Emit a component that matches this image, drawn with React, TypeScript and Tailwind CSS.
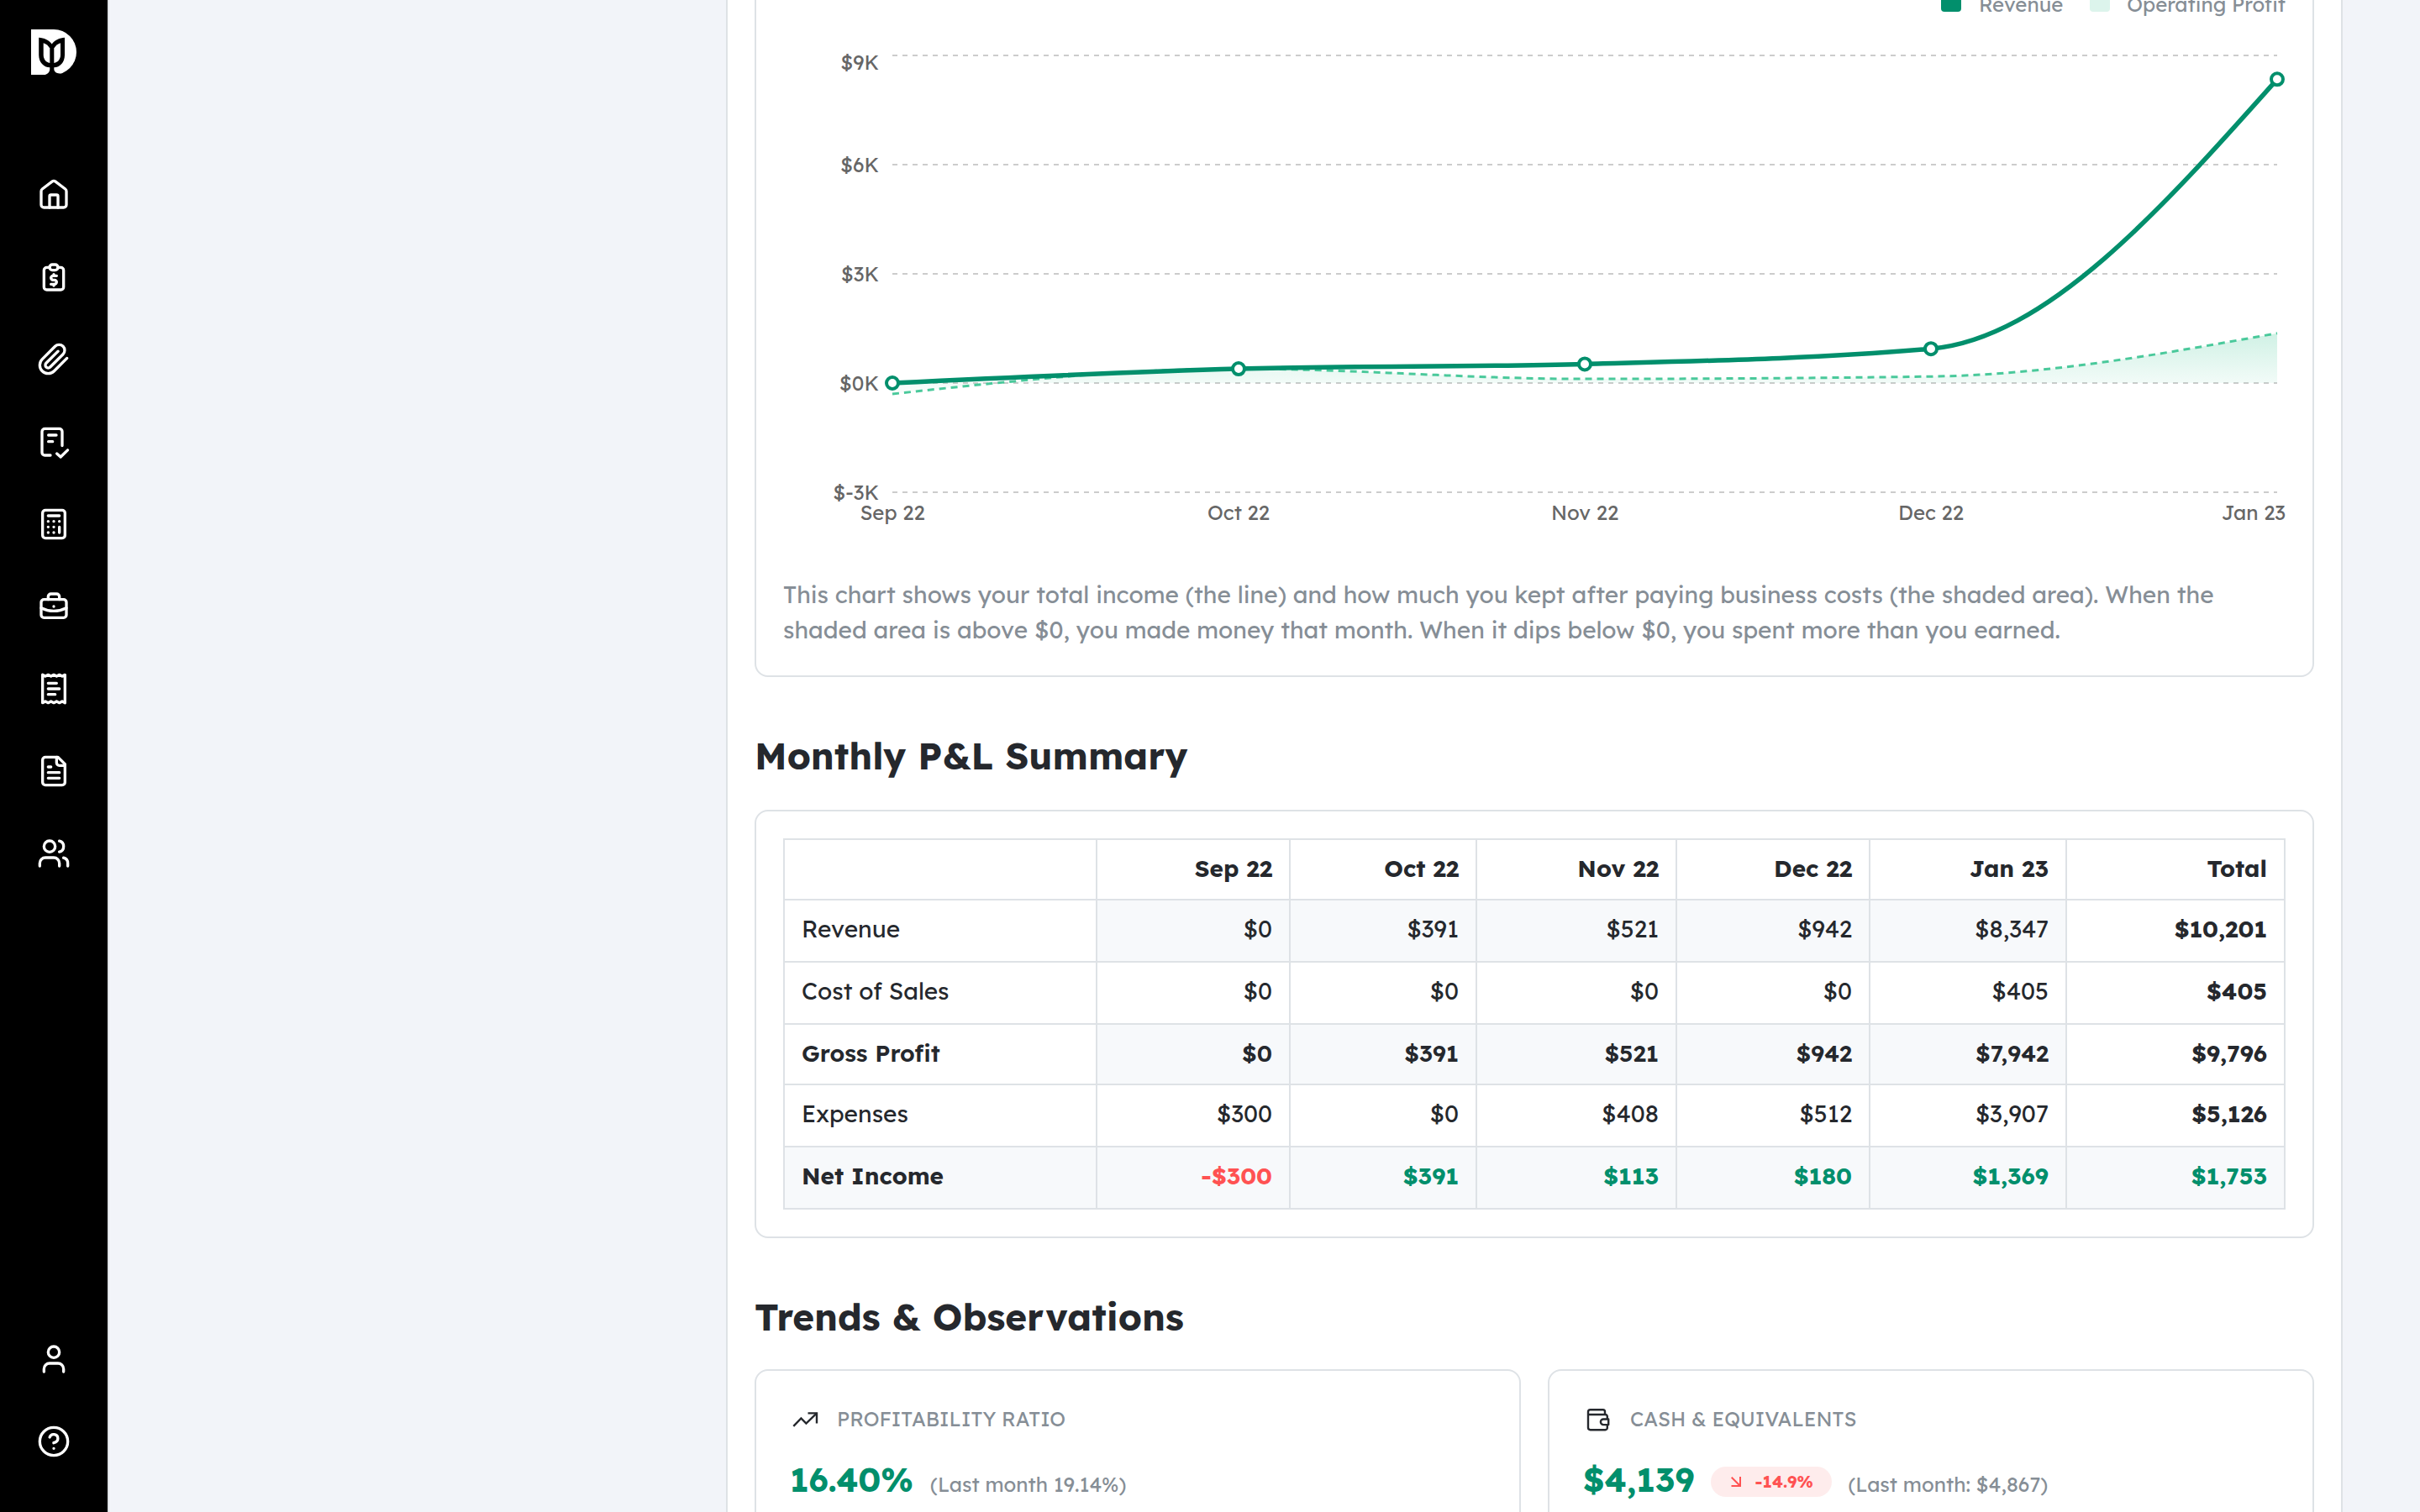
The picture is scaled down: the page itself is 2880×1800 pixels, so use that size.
import type { ReactNode } from "react";

const NAV_ICONS: { label: string; icon: ReactNode }[] = [
  {
    label: "Home",
    icon: (
      <>
        <path d="M3 9.4a2 2 0 0 1 .8-1.6l7-5.3a2 2 0 0 1 2.4 0l7 5.3a2 2 0 0 1 .8 1.6V19a2 2 0 0 1-2 2H5a2 2 0 0 1-2-2z" />
        <path d="M9 21v-8a1 1 0 0 1 1-1h4a1 1 0 0 1 1 1v8" />
      </>
    ),
  },
  {
    label: "Reports",
    icon: (
      <>
        <path d="M9 5H7a2 2 0 0 0-2 2v12a2 2 0 0 0 2 2h10a2 2 0 0 0 2-2V7a2 2 0 0 0-2-2h-2" />
        <rect x="9" y="3" width="6" height="4" rx="2" />
        <path d="M14 11h-2.5a1.5 1.5 0 0 0 0 3h1a1.5 1.5 0 0 1 0 3H10" />
        <path d="M12 17v1m0-8v1" />
      </>
    ),
  },
  {
    label: "Attachments",
    icon: (
      <path d="m21.44 11.05-9.19 9.19a6 6 0 0 1-8.49-8.49l9.19-9.19a4 4 0 0 1 5.66 5.66l-9.2 9.19a2 2 0 0 1-2.83-2.83l8.49-8.48" />
    ),
  },
  {
    label: "Tasks",
    icon: (
      <>
        <path d="M9.6 21.6H5.6a2 2 0 0 1-2-2v-15a2 2 0 0 1 2-2H16a2 2 0 0 1 2 2v10.1" />
        <path d="M8.2 7.2h5.6M8.2 11.8h3" />
        <path d="m14.2 20.4 2.7 2.4 5-4.9" />
      </>
    ),
  },
  {
    label: "Calculator",
    icon: (
      <>
        <rect x="4" y="2" width="16" height="20" rx="2" />
        <path d="M8 6h8M16 14v4M16 10h.01M12 10h.01M8 10h.01M12 14h.01M8 14h.01M12 18h.01M8 18h.01" />
      </>
    ),
  },
  {
    label: "Business",
    icon: (
      <>
        <rect x="3" y="7" width="18" height="13" rx="2" />
        <path d="M8 7V5a2 2 0 0 1 2-2h4a2 2 0 0 1 2 2v2" />
        <path d="M12 12v.01" />
        <path d="M3 13a20 20 0 0 0 18 0" />
      </>
    ),
  },
  {
    label: "Receipts",
    icon: (
      <>
        <path d="M4 2v20l2-1 2 1 2-1 2 1 2-1 2 1 2-1 2 1V2l-2 1-2-1-2 1-2-1-2 1-2-1-2 1Z" />
        <path d="M14 8H8M16 12H8M13 16H8" />
      </>
    ),
  },
  {
    label: "Documents",
    icon: (
      <>
        <path d="M15 2H6a2 2 0 0 0-2 2v16a2 2 0 0 0 2 2h12a2 2 0 0 0 2-2V7Z" />
        <path d="M14 2v4a2 2 0 0 0 2 2h4" />
        <path d="M10 9H8M16 13H8M16 17H8" />
      </>
    ),
  },
  {
    label: "Team",
    icon: (
      <>
        <path d="M16 21v-2a4 4 0 0 0-4-4H6a4 4 0 0 0-4 4v2" />
        <circle cx="9" cy="7" r="4" />
        <path d="M22 21v-2a4 4 0 0 0-3-3.87M16 3.13a4 4 0 0 1 0 7.75" />
      </>
    ),
  },
];

const FOOTER_ICONS: { label: string; icon: ReactNode }[] = [
  {
    label: "Account",
    icon: (
      <>
        <path d="M19 21v-2a4 4 0 0 0-4-4H9a4 4 0 0 0-4 4v2" />
        <circle cx="12" cy="7" r="4" />
      </>
    ),
  },
  {
    label: "Help",
    icon: (
      <>
        <circle cx="12" cy="12" r="10" />
        <path d="M9.09 9a3 3 0 0 1 5.83 1c0 2-3 3-3 3M12 17h.01" />
      </>
    ),
  },
];

function NavButton({ label, icon }: { label: string; icon: ReactNode }) {
  return (
    <button aria-label={label} className="block w-10 h-10">
      <svg
        viewBox="0 0 24 24"
        className="w-10 h-10"
        fill="none"
        stroke="#fff"
        strokeWidth="2"
        strokeLinecap="round"
        strokeLinejoin="round"
      >
        {icon}
      </svg>
    </button>
  );
}

function Logo() {
  return (
    <svg viewBox="0 0 54 54" className="w-[54px] h-[54px]">
      <path d="M0 0H27A27 27 0 0 1 27 54H0Z" fill="#fff" />
      {/* stem */}
      <path
        d="M22.3 44v3c0 4-3.2 7.2-7.3 7.2V55h19.7v-2.6c-4.4.4-7.4-2-7.4-5.4v-3z"
        fill="#000"
      />
      {/* tulip */}
      <path
        d="M9.2 9.8c6.3.4 12 3 15.5 7.6C28.2 12.8 34 10.2 40 9.8V30.5c0 8.5-5.5 14.8-12.7 14.8h-5C15 45.3 9.2 39 9.2 30.5z"
        fill="#000"
      />
      <path d="M14.7 16.2c3.2 1 5.9 3.2 7.6 6.4V40c-4.8-.8-7.6-4.8-7.6-9.5z" fill="#fff" />
      <path d="M35 16.2c-3.3 1-6 3.2-7.7 6.4V40c4.8-.8 7.7-4.8 7.7-9.5z" fill="#fff" />
    </svg>
  );
}

function Sidebar() {
  return (
    <aside className="w-[130px] h-full shrink-0 bg-black border-r-2 border-[#dee2e6] flex flex-col items-center">
      <div className="pt-[35px] pb-[123px]">
        <Logo />
      </div>
      <nav className="flex flex-col gap-[58px]">
        {NAV_ICONS.map((item) => (
          <NavButton key={item.label} {...item} />
        ))}
      </nav>
      <div className="mt-auto mb-16 flex flex-col gap-[58px]">
        {FOOTER_ICONS.map((item) => (
          <NavButton key={item.label} {...item} />
        ))}
      </div>
    </aside>
  );
}

/* ---------- Chart ---------- */

type Point = [number, number];

const MONTHS = ["Sep 22", "Oct 22", "Nov 22", "Dec 22", "Jan 23"];
const REVENUE = [0, 391, 521, 942, 8347];
const PROFIT = [-300, 391, 113, 180, 1369];
const TICKS = [9, 6, 3, 0, -3];

const xAt = (i: number) => 130 + i * 412;
const yAt = (v: number) => 436 - (v / 3000) * 130;

// Monotone cubic interpolation
function curve(pts: Point[]) {
  const n = pts.length;
  const slope = (a: Point, b: Point) => (b[1] - a[1]) / (b[0] - a[0]);
  const t: number[] = [];
  for (let i = 1; i < n - 1; i++) {
    const s0 = slope(pts[i - 1], pts[i]);
    const s1 = slope(pts[i], pts[i + 1]);
    const p = (s0 + s1) / 2;
    t[i] =
      (Math.sign(s0) + Math.sign(s1)) *
      Math.min(Math.abs(s0), Math.abs(s1), 0.5 * Math.abs(p));
  }
  t[0] = (3 * slope(pts[0], pts[1]) - t[1]) / 2;
  t[n - 1] = (3 * slope(pts[n - 2], pts[n - 1]) - t[n - 2]) / 2;

  let d = `M${pts[0][0]} ${pts[0][1]}`;
  for (let i = 0; i < n - 1; i++) {
    const [x0, y0] = pts[i];
    const [x1, y1] = pts[i + 1];
    const dx = (x1 - x0) / 3;
    d += `C${x0 + dx} ${y0 + dx * t[i]} ${x1 - dx} ${y1 - dx * t[i + 1]} ${x1} ${y1}`;
  }
  return d;
}

function RevenueChart() {
  const revenue = REVENUE.map((v, i): Point => [xAt(i), yAt(v)]);
  const profit = PROFIT.map((v, i): Point => [xAt(i), yAt(v)]);
  const profitPath = curve(profit);

  return (
    <svg
      width="1788"
      height="667"
      viewBox="0 0 1788 667"
      className="block text-2xl"
      fill="none"
    >
      <defs>
        <linearGradient id="profit-fill" x1="0" y1="0" x2="0" y2="1">
          <stop offset="0%" stopColor="#4ac99b" stopOpacity="0.26" />
          <stop offset="100%" stopColor="#4ac99b" stopOpacity="0.03" />
        </linearGradient>
      </defs>

      {TICKS.map((k) => (
        <g key={k}>
          <line
            x1={xAt(0)}
            x2={xAt(4)}
            y1={yAt(k * 1000)}
            y2={yAt(k * 1000)}
            stroke="#ccc"
            strokeWidth="2"
            strokeDasharray="6 6"
          />
          <text
            x="114"
            y={yAt(k * 1000) + (k === 9 ? 17 : 9)}
            textAnchor="end"
            fill="#666"
          >
            ${k}K
          </text>
        </g>
      ))}

      {MONTHS.map((m, i) => (
        <text
          key={m}
          x={i === 4 ? 1788 : xAt(i)}
          y="599"
          textAnchor={i === 4 ? "end" : "middle"}
          fill="#666"
        >
          {m}
        </text>
      ))}

      <path d={`${profitPath}L${xAt(4)} ${yAt(0)}H${xAt(0)}Z`} fill="url(#profit-fill)" />
      <path d={profitPath} stroke="#4ac99b" strokeWidth="3" strokeDasharray="8 6" />
      <path d={curve(revenue)} stroke="#028f6c" strokeWidth="5.5" />
      {revenue.map(([x, y]) => (
        <circle key={x} cx={x} cy={y} r="7" fill="#fff" stroke="#028f6c" strokeWidth="4" />
      ))}
    </svg>
  );
}

function ChartCard() {
  return (
    <section className="-mt-16 border-2 border-[#dee2e6] rounded-2xl px-8 pt-[52px] pb-[33px]">
      <div className="flex justify-end text-2xl leading-[30px] text-[#868e96]">
        <div className="flex items-start mr-8">
          <span className="w-6 h-6 rounded bg-[#028f6c] mr-[21px]" />
          Revenue
        </div>
        <div className="flex items-start">
          <span className="w-6 h-6 rounded bg-[#dcf4ec] mr-5" />
          Operating Profit
        </div>
      </div>
      <RevenueChart />
      <p className="text-[28px] leading-[42px] text-[#868e96]">
        This chart shows your total income (the line) and how much you kept after paying business
        costs (the shaded area). When the shaded area is above $0, you made money that month. When
        it dips below $0, you spent more than you earned.
      </p>
    </section>
  );
}

/* ---------- P&L table ---------- */

const PL_ROWS = [
  { label: "Revenue", values: ["$0", "$391", "$521", "$942", "$8,347", "$10,201"] },
  { label: "Cost of Sales", values: ["$0", "$0", "$0", "$0", "$405", "$405"] },
  { label: "Gross Profit", bold: true, values: ["$0", "$391", "$521", "$942", "$7,942", "$9,796"] },
  { label: "Expenses", values: ["$300", "$0", "$408", "$512", "$3,907", "$5,126"] },
  { label: "Net Income", bold: true, net: true, values: ["-$300", "$391", "$113", "$180", "$1,369", "$1,753"] },
];

const ROW_HEIGHTS = ["h-[74px]", "h-[74px]", "h-[72px]", "h-[74px]", "h-[74px]"];
const CELL_PADDING = ["pb-1.5", "pb-1.5", "pb-1", "pb-1.5", "pb-1.5"];

function PLTable() {
  return (
    <table className="w-full table-fixed border-separate border-spacing-0 border-t-2 border-l-2 border-[#dee2e6] text-[28px] leading-[35px] text-[#25282d]">
      <colgroup>
        <col className="w-[372px]" />
        <col className="w-[230px]" />
        <col className="w-[222px]" />
        <col className="w-[238px]" />
        <col className="w-[230px]" />
        <col className="w-[234px]" />
        <col className="w-[260px]" />
      </colgroup>
      <thead>
        <tr className="h-[72px]">
          <th className="border-r-2 border-b-2 border-[#dee2e6]" />
          {[...MONTHS, "Total"].map((m) => (
            <th
              key={m}
              className="border-r-2 border-b-2 border-[#dee2e6] px-5 pt-0 pb-[3px] text-right font-bold"
            >
              {m}
            </th>
          ))}
        </tr>
      </thead>
      <tbody>
        {PL_ROWS.map((row, r) => {
          const labelWeight = row.net ? "font-bold" : row.bold ? "font-semibold" : "";
          return (
            <tr key={row.label} className={ROW_HEIGHTS[r]}>
              <td
                className={`border-r-2 border-b-2 border-[#dee2e6] px-5 pt-0 ${CELL_PADDING[r]} ${labelWeight} ${
                  row.net ? "bg-[#f7f9fb]" : ""
                }`}
              >
                {row.label}
              </td>
              {row.values.map((v, c) => {
                const total = c === 5;
                const striped = row.net || (r % 2 === 0 && !total);
                const color = !row.net ? "" : v.startsWith("-") ? "text-[#ff5252]" : "text-[#028f6c]";
                return (
                  <td
                    key={c}
                    className={`border-r-2 border-b-2 border-[#dee2e6] px-5 pt-0 ${CELL_PADDING[r]} text-right ${
                      total ? "font-bold" : labelWeight
                    } ${striped ? "bg-[#f7f9fb]" : ""} ${color}`}
                  >
                    {v}
                  </td>
                );
              })}
            </tr>
          );
        })}
      </tbody>
    </table>
  );
}

/* ---------- Trends ---------- */

function TrendIcon() {
  return (
    <svg viewBox="0 0 36 36" className="w-9 h-9" fill="none" stroke="#25282d" strokeWidth="2.4">
      <path d="M4.3 25.9 13.4 16.4 19.4 22.6 32 10.4" />
      <path d="M21.5 10.4H32V22.5" />
    </svg>
  );
}

function WalletIcon() {
  return (
    <svg
      viewBox="0 0 36 36"
      className="w-9 h-9"
      fill="none"
      stroke="#25282d"
      strokeWidth="2.4"
      strokeLinejoin="round"
    >
      <path d="M26 12V8.5a2.3 2.3 0 0 0-2.3-2.3H8.6A2.6 2.6 0 0 0 6 8.8V27.6a2.6 2.6 0 0 0 2.6 2.6h17.9a2.3 2.3 0 0 0 2.3-2.3V24" />
      <path d="M6.2 12h20.3a2.3 2.3 0 0 1 2.3 2.3v3.2" />
      <path d="M30.2 17.5h-6a3.3 3.3 0 0 0 0 6.6h6z" />
    </svg>
  );
}

function TrendCard({ icon, title, children }: { icon: ReactNode; title: string; children: ReactNode }) {
  return (
    <div className="flex-1 h-[400px] border-2 border-[#dee2e6] rounded-2xl p-10">
      <div className="flex items-center gap-5 h-9">
        {icon}
        <span className="text-2xl text-[#868e96] uppercase leading-[30px] mb-0.5">{title}</span>
      </div>
      <div className="flex items-baseline mt-7 leading-[50px]">{children}</div>
    </div>
  );
}

export default function App() {
  return (
    <div className="flex w-[2880px] h-[1800px] overflow-hidden bg-[#f2f4f9] font-[Lexend,Inter,sans-serif] text-[#25282d]">
      <Sidebar />

      <main className="ml-[734px] w-[1924px] h-full shrink-0 overflow-hidden bg-white border-x-2 border-[#dee2e6] px-8">
        <ChartCard />

        <h2 className="mt-[61px] mb-[31px] text-[44px] leading-[66px] font-bold">
          Monthly P&amp;L Summary
        </h2>
        <section className="border-2 border-[#dee2e6] rounded-2xl p-8">
          <PLTable />
        </section>

        <h2 className="mt-[61px] mb-[29px] text-[44px] leading-[66px] font-bold">
          Trends &amp; Observations
        </h2>
        <div className="flex gap-8">
          <TrendCard icon={<TrendIcon />} title="Profitability Ratio">
            <span className="text-[40px] font-bold text-[#028f6c]">16.40%</span>
            <span className="ml-5 text-2xl text-[#868e96]">(Last month 19.14%)</span>
          </TrendCard>
          <TrendCard icon={<WalletIcon />} title="Cash &amp; Equivalents">
            <span className="text-[40px] font-bold text-[#028f6c]">$4,139</span>
            <span className="ml-5 w-36 h-9 pl-6 rounded-full bg-[#feecec] self-start mt-[10px] flex items-center text-xl leading-9 font-bold text-[#ff5252]">
              <svg viewBox="0 0 12 12" className="w-3 h-3 mr-4" fill="none" stroke="#ff5252" strokeWidth="2">
                <path d="M.7.7 11 11M11 0v11H.5" />
              </svg>
              -14.9%
            </span>
            <span className="ml-[19px] text-2xl text-[#868e96]">(Last month: $4,867)</span>
          </TrendCard>
        </div>
      </main>
    </div>
  );
}
